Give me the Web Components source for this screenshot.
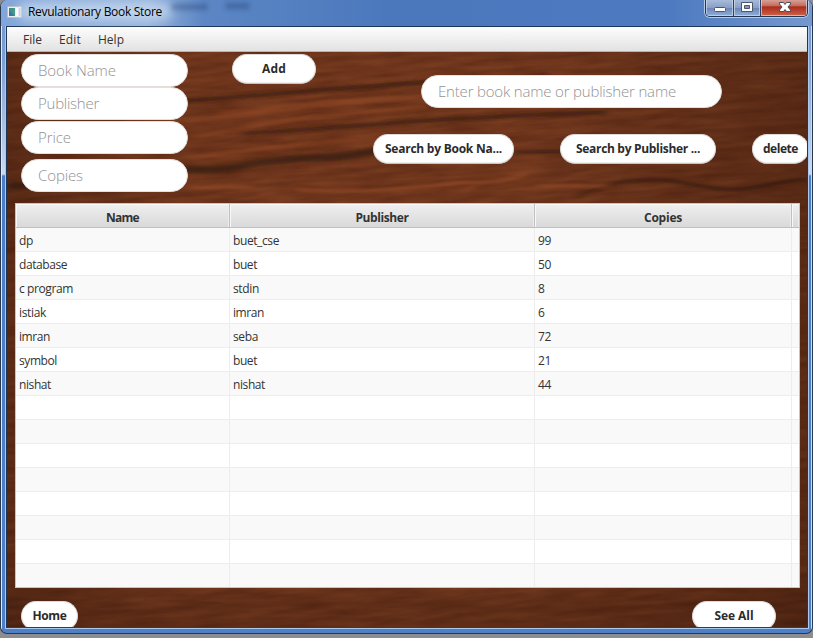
<!DOCTYPE html>
<html lang="en"><head><meta charset="utf-8"><title>Revulationary Book Store</title>
<style>html,body{margin:0;width:813px;height:638px;overflow:hidden;background:#8d8d90;font-family:"Open Sans","Noto Sans",sans-serif}</style></head><body>
<store-window></store-window>
<script>
const def=(name,html,after)=>customElements.define(name,class extends HTMLElement{
  connectedCallback(){if(this.shadowRoot)return;
    const t=document.createElement('template');t.innerHTML=typeof html==='function'?html(this):html;
    this.attachShadow({mode:'open'}).append(t.content.cloneNode(true));if(after)after(this);}
});
/* A line of text whose tracking is set so that it takes the width in its "w" attribute */
def('fit-text','<style>:host{display:inline-block;white-space:pre}span{display:inline-block}</style><span><slot></slot></span>',el=>{
  const w=+el.getAttribute('w'),n=el.textContent.length,s=el.shadowRoot.querySelector('span');
  if(w)s.style.letterSpacing=((w-s.getBoundingClientRect().width)/n)+'px';
});
def('pill-field',`<style>:host{display:flex;align-items:center;box-sizing:border-box;width:167px;height:33px;border-radius:17px;background:#fff;border:1px solid #e4dfdc;padding:0 0 1px 16px;color:#929292;font-size:15px;font-weight:300;line-height:20px}</style><slot></slot>`);
def('pill-button',`<style>:host{display:flex;align-items:center;justify-content:center;box-sizing:border-box;height:30px;border-radius:15px;background:#fff;border:1px solid #dedad8;border-bottom-color:#c8c5c3;box-shadow:inset 0 -1px #eee;color:#2b2b2b;font-size:12px;font-weight:700;line-height:18px;flex:none}</style><slot></slot>`);
def('title-bar',`<style>:host{display:flex;height:26px;position:relative;align-items:flex-start;color:#000;font-size:12px}
.icon{margin:6px 0 0 6px;width:15px;height:12px;flex:none}
.title{margin:3px 0 0 6px;line-height:17px;position:relative}
.title:before{content:"";position:absolute;left:-10px;right:-10px;top:0;height:17px;background:#dce8f6a8;border-radius:9px;filter:blur(6px)}
fit-text{position:relative}.ghost{margin:-3px 0 0 10px;width:90px;height:19px;filter:blur(2.5px);opacity:.38}
.ctl{display:flex;margin-left:auto;margin-right:4px;width:101px;height:16px;border:1px solid #243551;border-top:0;border-radius:0 0 5px 5px;box-shadow:0 0 0 1px #b4cbe9;overflow:hidden;flex:none}
.ctl svg{display:block}</style>
<svg class="icon" viewBox="0 0 15 12"><rect x=".5" y=".5" width="14" height="11" fill="#eee" stroke="#b7bdc4"/><rect x="2" y="2" width="6" height="8" fill="#378f80"/><path d="M2 10V5l6 5z" fill="#386f9d"/><path d="M9 2h2v8H9z" fill="#fff"/><path d="M12 2h1.5v8H12z" fill="#ccc"/></svg>
<div class="title"><fit-text w="134">Revulationary Book Store</fit-text></div>
<svg class="ghost" viewBox="0 0 90 19"><path d="M0 10h36M54 9h24" stroke="#122d5b" stroke-width="6" stroke-dasharray="5 1"/></svg>
<div class="ctl"><svg width="101" height="16"><defs><linearGradient id="b" x2="0" y2="1"><stop stop-color="#a7bbda"/><stop offset=".48" stop-color="#899fc6"/><stop offset=".5" stop-color="#6c86b4"/><stop offset="1" stop-color="#90afd9"/></linearGradient><linearGradient id="r" x2="0" y2="1"><stop stop-color="#d7a096"/><stop offset=".38" stop-color="#c3695a"/><stop offset=".42" stop-color="#aa2c1b"/><stop offset="1" stop-color="#cc644c"/></linearGradient></defs>
<path fill="url(#b)" d="M0 0h55v16H0z"/><path fill="url(#r)" d="M54 0h47v16H54z"/><path d="M27.500 0v16M54.500 0v16" stroke="#30415f"/><path d="M.5 0v15.500h26V0M28.500 0v15.500h25V0M55.500 0v15.500h45V0" fill="none" stroke="#d5e0ef" opacity=".65"/>
<rect x="8.500" y="7.500" width="11" height="4" rx="1" fill="#fff" stroke="#4d5568"/><path d="M35.500 2.500h11v9h-11z" fill="#fff" stroke="#4d5568"/><path d="M38.500 5.500h5v3h-5z" fill="#8198be" stroke="#4d5568"/>
<path d="M73.500 2.500h4l1.500 2 1.500-2h4v1.500l-2.500 3 2.500 3v1.500h-4l-1.500-2-1.500 2h-4v-1.500l2.500-3-2.500-3z" fill="#fff" stroke="#484c60"/></svg></div>`);
def('menu-bar',`<style>:host{display:flex;gap:17px;box-sizing:border-box;height:25px;padding:3px 0 0 16px;background:linear-gradient(#fdfdfd,#e2e2e2);border-bottom:1px solid #b7b5b3;color:#333;font-size:12px;line-height:19px;position:relative}</style>
<fit-text w="19">File</fit-text><fit-text w="22">Edit</fit-text><fit-text w="26">Help</fit-text>`);
def('wood-panel',`<style>:host{display:block;position:relative;overflow:hidden;height:576px;background:#5d2d18}.wood{position:absolute;inset:0}.content{position:relative;height:100%}</style>
<svg class="wood" width="801" height="577"><defs>
<filter id="g" x="0" y="0" width="100%" height="100%" color-interpolation-filters="sRGB"><feTurbulence type="fractalNoise" baseFrequency=".02 .16" numOctaves="4" seed="8"/><feColorMatrix values=".15 0 0 0 .355  .1 0 0 0 .158  .06 0 0 0 .078  0 0 0 0 1"/></filter>
<filter id="s" filterUnits="userSpaceOnUse" x="-20" y="-20" width="840" height="620"><feGaussianBlur stdDeviation="4 1.700"/></filter>
<linearGradient id="v"><stop stop-color="#240e06" stop-opacity=".28"/><stop offset=".2" stop-color="#240e06" stop-opacity="0"/><stop offset=".65" stop-color="#240e06" stop-opacity="0"/><stop offset="1" stop-color="#240e06" stop-opacity=".3"/></linearGradient>
<linearGradient id="f" x2="0" y2="1"><stop offset=".9" stop-color="#240e06" stop-opacity="0"/><stop offset=".96" stop-color="#240e06" stop-opacity=".2"/></linearGradient></defs>
<g transform="rotate(-4 400 280)"><rect x="-40" y="-40" width="890" height="660" filter="url(#g)"/></g>
<g fill="none" filter="url(#s)"><g stroke="#35180c" opacity=".7"><path stroke-width="4" d="M175 49C260 43 330 36 420 30S500 33 540 22M235 82C310 76 340 75 400 70S520 63 600 60"/><path stroke-width="8" d="M0 134C50 133 70 124 120 119S200 122 240 113S340 108 375 97"/><path stroke-width="4" d="M505 101C540 97 560 103 610 96M375 106C410 100 430 108 465 99M570 145c50-25 90-18 130-10s60-5 100-8"/></g>
<g stroke="#a8522a" opacity=".38" stroke-width="3"><path d="M180 70C240 60 310 55 420 43M190 85C260 70 320 62 420 55M185 106C250 94 320 94 375 82M210 61C300 53 350 45 460 44"/></g><g stroke="#bd6335" opacity=".55" stroke-width="2"><path d="M180 135h65M290 138C350 140 370 139 430 133S480 134 520 122M455 139l14-5M530 134h70"/></g></g>
<rect width="801" height="577" fill="url(#v)"/><rect width="801" height="577" fill="url(#f)"/></svg><div class="content"><slot></slot></div>`);
def('store-tools',`<style>:host{display:grid;grid-template-columns:167px 84px 1fr;column-gap:44px;height:151px;padding-left:14px;box-sizing:border-box}
.fields{padding-top:2px}.fields pill-field:nth-child(3){margin-top:1px}.fields pill-field:nth-child(4){margin-top:5px}
.add{margin-top:2px}.right{margin-left:13px;padding-top:23px}.search{width:301px;margin-left:48px}.actions{display:flex;margin-top:26px}</style>
<div class="fields"><pill-field><fit-text w="78">Book Name</fit-text></pill-field><pill-field><fit-text w="61">Publisher</fit-text></pill-field><pill-field><fit-text w="33">Price</fit-text></pill-field><pill-field><fit-text w="45">Copies</fit-text></pill-field></div>
<pill-button class="add"><fit-text w="24">Add</fit-text></pill-button>
<div class="right"><pill-field class="search"><fit-text w="238">Enter book name or publisher name</fit-text></pill-field>
<div class="actions"><pill-button style="width:141px"><fit-text w="117">Search by Book Na...</fit-text></pill-button><pill-button style="width:156px;margin-left:46px"><fit-text w="124">Search by Publisher ...</fit-text></pill-button><pill-button style="width:57px;margin-left:36px"><fit-text w="35">delete</fit-text></pill-button></div></div>`);
const rows=[['dp',14,'buet_cse',46,'99'],['database',48,'buet',24,'50'],['c program',54,'stdin',26,'8'],['istiak',27,'imran',31,'6'],['imran',31,'seba',25,'72'],['symbol',38,'buet',24,'21'],['nishat',32,'nishat',32,'44']];
def('book-table',()=>`<style>:host{display:block;box-sizing:border-box;width:785px;height:385px;margin-left:8px;border:1px solid #c8c4c1;background:#fff;color:#333;font-size:12px}
.row{display:grid;grid-template-columns:214px 305px 257px 1fr;height:24px;box-sizing:border-box}
.row>div{box-sizing:border-box;border-right:1px solid #ededed;border-bottom:1px solid #ededed;padding:4px 0 0 3px;line-height:17px}
.row:nth-child(odd)>div{background:#f9f9f9}.row>div:last-child{border-right:0}
.row.head>div{background:linear-gradient(#efefef,#d9d9d9);border-color:#c0c0c0;box-shadow:inset 1px 1px #f8f8f8,inset -1px 0 #ececec;text-align:center;font-weight:700;padding:5px 0 0}
.row:last-child{height:23px}.row:last-child>div{border-bottom:0}</style>
<div class="row head"><div><fit-text w="33">Name</fit-text></div><div><fit-text w="53">Publisher</fit-text></div><div><fit-text w="38">Copies</fit-text></div><div></div></div>`+
Array.from({length:15},(_,i)=>{const r=rows[i];return `<div class="row">${r?`<div><fit-text w="${r[1]}">${r[0]}</fit-text></div><div><fit-text w="${r[3]}">${r[2]}</fit-text></div><div><fit-text w="${r[4].length*6.5}">${r[4]}</fit-text></div><div></div>`:'<div></div><div></div><div></div><div></div>'}</div>`}).join(''));
def('bottom-actions',`<style>:host{display:flex;justify-content:space-between;padding:13px 31px 0 14px}</style>
<pill-button style="width:57px"><fit-text w="34">Home</fit-text></pill-button><pill-button style="width:84px"><fit-text w="39">See All</fit-text></pill-button>`);
def('store-window',`<style>:host{display:block;box-sizing:border-box;width:813px;height:634px;border:1px solid #283850;border-top:0;border-radius:7px;background:linear-gradient(90deg,#dbe9fa 1px,transparent 1px,transparent 810px,#c8dcf5 810px),linear-gradient(#7096cf 0,#7d9fd4 60px,#cbdaf0 174px,#4c7ec7 176px,#4f80c6 100%);overflow:hidden}
title-bar{background:linear-gradient(90deg,#82a6d9 0,#95b3dc 18%,#5c86c4 25%,#4b78bd 48%,#4c79bf 82%,#7698cf)}
.client{margin:0 4px 0 5px;height:602px;box-sizing:border-box;border:1px solid #1e3658;border-bottom-color:#253f63;box-shadow:0 0 0 1px #a9c9ee;overflow:hidden}</style>
<title-bar></title-bar><div class="client"><menu-bar></menu-bar><wood-panel><store-tools></store-tools><book-table></book-table><bottom-actions></bottom-actions></wood-panel></div>`);
</script></body></html>
